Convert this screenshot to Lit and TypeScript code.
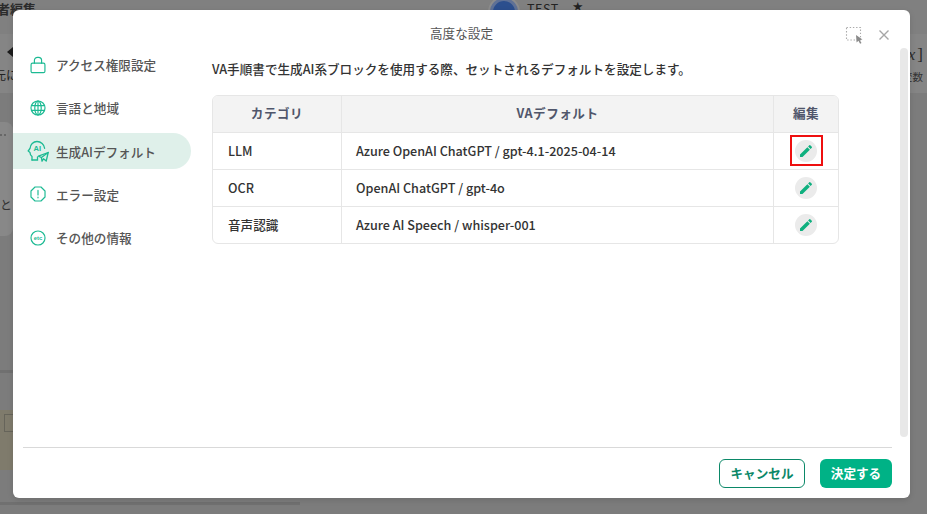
import { LitElement, html, css, svg } from "lit";
import { customElement } from "lit/decorators.js";

const icons: Record<string, unknown> = {
  lock: svg`<rect x="2.300" y="8" width="15.400" height="10.500" rx="1.600"/><path d="M6 8V5a3.500 3.500 0 0 1 3.500-3.500h1A3.500 3.500 0 0 1 14 5v3"/>`,
  globe: svg`<circle cx="10" cy="10" r="7.800"/><ellipse cx="10" cy="10" rx="3.600" ry="7.800"/><path d="M10 2.200v15.600M2.800 7.300h14.400M2.800 12.700h14.400"/>`,
  ai: svg`<path d="M5 20v-3.500C3.700 15.500 3 14.200 3 12.500L1.200 11 3 8.500C3.200 4.500 6.300 1.500 10 1.500c4 0 7.200 3 7.600 6.800"/><path d="M5 20h5.500v-3"/><path d="M21.200 12.500L19.200 21l-2.700-2.200-1.500 2.400-.6-3.700-3-1.300z" stroke-linejoin="round"/><path d="M21.200 12.500l-6.800 5"/><text x="10.300" y="11" text-anchor="middle" class="t ai">AI</text>`,
  warn: svg`<path d="M6.700 2.200h6.600l4.500 4.500v6.600l-4.500 4.500H6.700l-4.500-4.500V6.700z" stroke-linejoin="round"/><path d="M10 6v5M10 13.300v1"/>`,
  etc: svg`<circle cx="10" cy="10" r="7.800"/><text x="10" y="12.200" text-anchor="middle" class="t etc">etc</text>`,
};

const navItems = [
  { key: "lock", label: "アクセス権限設定" },
  { key: "globe", label: "言語と地域" },
  { key: "ai", label: "生成AIデフォルト", active: true },
  { key: "warn", label: "エラー設定" },
  { key: "etc", label: "その他の情報" },
];

const rows = [
  { cat: "LLM", val: "Azure OpenAI ChatGPT / gpt-4.1-2025-04-14", marked: true },
  { cat: "OCR", val: "OpenAI ChatGPT / gpt-4o" },
  { cat: "音声認識", val: "Azure AI Speech / whisper-001" },
];

@customElement("app-root")
export class AppRoot extends LitElement {
  static styles = css`
    :host {
      display: block;
      position: relative;
      width: 927px;
      height: 514px;
      overflow: hidden;
      background: #7c7c7c;
      font-family: "Noto Sans CJK JP", "Noto Sans", sans-serif;
      color: #333;
    }
    .page { height: 100%; display: flex; flex-direction: column; color: #222; }
    .topbar { height: 34px; flex: none; display: flex; align-items: flex-start; font-size: 12px; overflow: hidden; background: #808080; }
    .title { margin-top: -1px; font-weight: 700; font-size: 13px; color: #2b2b2b; width: 490px; flex: none; white-space: nowrap; text-indent: -3px; }
    .orb { width: 28px; height: 28px; border-radius: 50%; background: #2c4f8e; border: 3px solid #5f7196; box-shadow: 0 0 0 2px #8c8c8c; margin-top: -2px; box-sizing: border-box; flex: none; }
    .test { font-size: 12.600px; line-height: 16px; margin: 1px 0 0 9px; letter-spacing: .5px; color: #222; }
    .star { font-size: 10px; line-height: 12px; margin: 0 0 0 14px; color: #222; }
    .tools { height: 59px; background: #858585; flex: none; display: flex; justify-content: space-between; }
    .back { width: 14px; padding-top: 13px; box-sizing: border-box; overflow: hidden; }
    .tri { width: 0; height: 0; margin-left: 7px; border-style: solid; border-width: 5px 6px 5px 0; border-color: transparent #1c1c1c transparent transparent; }
    .back span { display: block; font-size: 12px; white-space: nowrap; margin: 10px 0 0 -6px; line-height: 16px; }
    .var { width: 24px; padding: 11px 4px 0 0; box-sizing: border-box; text-align: right; overflow: hidden; display: flex; flex-direction: column; align-items: flex-end; }
    .var em { display: block; font: 17px/20px "Liberation Serif", serif; color: #2a2a2a; white-space: nowrap; }
    .var em i { font-style: italic; margin-right: 2px; }
    .var small { display: block; font-size: 10.500px; line-height: 14px; margin-top: 5px; white-space: nowrap; color: #333; }
    .mid { height: 277px; flex: none; padding-top: 29px; box-sizing: border-box; }
    .card { width: 13px; height: 114px; background: #888; border-radius: 0 8px 8px 0; font-size: 12px; box-sizing: border-box; padding-top: 12px; color: #333; overflow: hidden; line-height: 14px; }
    .dots { display: flex; gap: 2px; }
    .dots i { width: 2px; height: 2px; background: #5c5c5c; border-radius: 50%; }
    .card p { margin: 62px 0 0 0; }
    .band { height: 3px; width: 300px; background: #707070; flex: none; }
    .gap1 { height: 37px; flex: none; }
    .sand { height: 60px; width: 300px; background: #7f7b6c; flex: none; padding: 4px 0 0 4px; box-sizing: border-box; }
    .sand div { width: 12px; height: 16px; border: 1px solid #66645a; }
    .gap2 { height: 32px; flex: none; }
    .foot { flex: 1; }

    .modal {
      position: absolute;
      left: 13px;
      top: 10px;
      width: 897px;
      height: 488px;
      background: #fff;
      border-radius: 6px;
      display: flex;
      flex-direction: column;
      box-sizing: border-box;
      box-shadow: 0 2px 6px rgba(0, 0, 0, .12);
    }
    header {
      height: 38px;
      flex: none;
      display: flex;
      align-items: center;
      justify-content: center;
      position: relative;
      font-size: 12.600px;
      color: #555;
      padding-top: 7px;
      box-sizing: border-box;
    }
    .hicons { position: absolute; right: 20px; top: 15px; display: flex; align-items: center; gap: 15px; }
    .hicons svg { display: block; }
    .body { flex: 1; display: flex; min-height: 0; position: relative; }
    nav { width: 178px; flex: none; margin-top: -1.500px; display: flex; flex-direction: column; gap: 7.250px; }
    .item {
      height: 36px;
      display: flex;
      align-items: center;
      padding-left: 14px;
      gap: 7px;
      font-size: 12.600px;
      font-weight: 500;
      color: #555;
      border-radius: 0 18px 18px 0;
      flex: none;
      box-sizing: border-box;
    }
    .item.active { background: #dff0ea; }
    .slot { width: 22px; height: 22px; display: flex; align-items: center; justify-content: center; flex: none; }
    .item svg { width: 18px; height: 18px; fill: none; stroke: #1cba93; stroke-width: 1.300; stroke-linecap: round; display: block; }
    .item svg.wide { width: 22px; height: 22px; }
    .item svg .t { fill: #1cba93; stroke: none; font-family: "Liberation Sans", sans-serif; font-weight: 700; }
    .item svg .ai { font-size: 7.500px; }
    .item svg .etc { font-size: 6.500px; }
    main { flex: 1; padding: 12px 0 0 21px; min-width: 0; }
    .lead { font-size: 12.600px; font-weight: 500; color: #333; line-height: 18px; }
    .tbl {
      width: 627px;
      margin-top: 17px;
      border: 1px solid #e6e6e6;
      border-radius: 6px;
      box-sizing: border-box;
      display: grid;
      grid-template-columns: 129px 432px 1fr;
      font-size: 12.600px;
      overflow: hidden;
    }
    .cell { height: 37px; display: flex; align-items: center; box-sizing: border-box; border-bottom: 1px solid #e6e6e6; border-right: 1px solid #e6e6e6; padding: 0 0 2px 14px; color: #333; font-weight: 500; }
    .cell:nth-child(3n + 1) { padding-left: 15px; }
    .cell.last { border-right: 0; padding: 0; justify-content: center; }
    .cell.btm { border-bottom: 0; height: 36px; }
    .cell.h { background: #f3f3f3; justify-content: center; padding: 0 0 3px; font-weight: 700; color: #50566b; letter-spacing: .5px; }
    .pen { width: 22px; height: 22px; border-radius: 50%; background: #ebebeb; display: flex; align-items: center; justify-content: center; position: relative; }
    .pen svg { width: 16px; height: 16px; fill: #0fb07f; }
    .pen.marked::after { content: ""; position: absolute; inset: -5px -6px -4px -5px; border: 2px solid #ee0f0f; }
    .scroll { position: absolute; right: 2px; top: 0; width: 8px; height: 389px; background: #e8e8e8; border-radius: 4px; }
    footer { flex: none; height: 51px; margin: 0 18px 0 10px; border-top: 1px solid #d9d9d9; display: flex; justify-content: flex-end; align-items: center; gap: 15px; box-sizing: border-box; }
    button { height: 29px; border-radius: 6px; font: 700 12.600px "Noto Sans CJK JP", sans-serif; box-sizing: border-box; padding: 0 0 2px; }
    .cancel { width: 86px; background: #fff; color: #0b8868; border: 1px solid #0b8868; }
    .ok { width: 72px; background: #00b286; color: #fff; border: 0; }
  `;

  render() {
    return html`
      <div class="page">
        <div class="topbar"><span class="title">者編集</span><div class="orb"></div><span class="test">TEST</span><span class="star">★</span></div>
        <div class="tools">
          <div class="back"><div class="tri"></div><span>元に</span></div>
          <div class="var"><em><i>x</i>]</em><small>変数</small></div>
        </div>
        <div class="mid"><div class="card"><div class="dots"><i></i><i></i></div><p>と</p></div></div>
        <div class="band"></div>
        <div class="gap1"></div>
        <div class="sand"><div></div></div>
        <div class="gap2"></div>
        <div class="band"></div>
        <div class="foot"></div>
      </div>
      <div class="modal">
        <header>
          高度な設定
          <div class="hicons">
            <svg width="18" height="19" viewBox="0 0 18 19" fill="none"><path d="M1.500 2.500h14v12.500h-14z" stroke="#aaa" stroke-width="1.100" stroke-dasharray="1.400 1.800"/><path d="M11 10l6.500 4.500-2.800.5 1.800 3-1.400.8-1.700-3-1.800 1.700z" fill="#8a8a8a"/></svg>
            <svg width="12" height="12" viewBox="0 0 12 12" fill="none" stroke="#a6a6a6" stroke-width="1.400"><path d="M1.500 1.500l9 9M10.500 1.500l-9 9"/></svg>
          </div>
        </header>
        <div class="body">
          <nav>
            ${navItems.map((n) => html`
              <div class="item ${n.active ? "active" : ""}">
                <span class="slot">
                  <svg class="${n.key === "ai" ? "wide" : ""}" viewBox="${n.key === "ai" ? "0 0 22 22" : "0 0 20 20"}">${icons[n.key]}</svg>
                </span>
                <span>${n.label}</span>
              </div>`)}
          </nav>
          <main>
            <div class="lead">VA手順書で生成AI系ブロックを使用する際、セットされるデフォルトを設定します。</div>
            <div class="tbl">
              <div class="cell h">カテゴリ</div><div class="cell h">VAデフォルト</div><div class="cell h last">編集</div>
              ${rows.map((r, i) => {
                const b = i === rows.length - 1 ? "btm" : "";
                return html`
                  <div class="cell ${b}">${r.cat}</div>
                  <div class="cell ${b}">${r.val}</div>
                  <div class="cell last ${b}"><div class="pen ${r.marked ? "marked" : ""}"><svg viewBox="0 0 24 24"><path d="M3 17.250V21h3.750L17.810 9.940l-3.750-3.750L3 17.250zM20.710 7.040a1 1 0 0 0 0-1.410l-2.340-2.340a1 1 0 0 0-1.410 0l-1.830 1.830 3.750 3.750 1.830-1.830z"/></svg></div></div>`;
              })}
            </div>
          </main>
          <div class="scroll"></div>
        </div>
        <footer>
          <button class="cancel">キャンセル</button>
          <button class="ok">決定する</button>
        </footer>
      </div>
    `;
  }
}
